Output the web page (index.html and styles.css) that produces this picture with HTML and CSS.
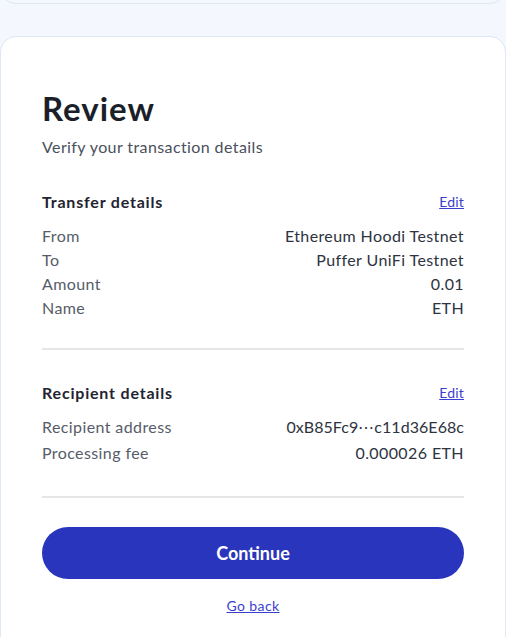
FILE: index.html
```html
<!DOCTYPE html>
<html lang="en">
<head>
<meta charset="utf-8">
<title>Review</title>
<link rel="stylesheet" href="styles.css">
</head>
<body>
<div class="page">
  <div class="prev-card"></div>
  <main class="card">
    <h1 class="title">Review</h1>
    <p class="subtitle">Verify your transaction details</p>

    <section class="section section-first">
      <div class="section-head">
        <h2 class="section-title">Transfer details</h2>
        <a class="edit" href="#">Edit</a>
      </div>
      <dl class="rows">
        <div class="row"><dt>From</dt><dd>Ethereum Hoodi Testnet</dd></div>
        <div class="row"><dt>To</dt><dd>Puffer UniFi Testnet</dd></div>
        <div class="row"><dt>Amount</dt><dd>0.01</dd></div>
        <div class="row"><dt>Name</dt><dd>ETH</dd></div>
      </dl>
    </section>

    <hr class="divider divider-first">

    <section class="section section-second">
      <div class="section-head">
        <h2 class="section-title">Recipient details</h2>
        <a class="edit" href="#">Edit</a>
      </div>
      <dl class="rows rows-loose">
        <div class="row"><dt>Recipient address</dt><dd class="address">0xB85Fc9⋯c11d36E68c</dd></div>
        <div class="row"><dt>Processing fee</dt><dd>0.000026 ETH</dd></div>
      </dl>
    </section>

    <hr class="divider divider-second">

    <div class="actions">
      <button class="primary" type="button">Continue</button>
      <a class="back" href="#">Go back</a>
    </div>
  </main>
</div>
</body>
</html>
```

FILE: styles.css
```css
* { box-sizing: border-box; }

html, body {
  margin: 0;
  padding: 0;
}

body {
  background: #f4f7fe;
  font-family: Lato, "Open Sans", sans-serif;
  color: #2d3340;
}

.page {
  display: flex;
  flex-direction: column;
}

.prev-card {
  height: 40px;
  margin-top: -36px;
  background: #f4f7fe;
  border: 1px solid #dfe7f5;
  border-radius: 16px;
}

.card {
  margin-top: 32px;
  background: #ffffff;
  border: 1px solid #dfe7f5;
  border-radius: 16px 16px 0 0;
  padding: 51px 41px 40px;
  min-height: 620px;
}

.title {
  margin: 0;
  font-size: 33px;
  line-height: 40px;
  font-weight: 700;
  letter-spacing: 1px;
  color: #1b1f2a;
}

.subtitle {
  margin: 7px 0 0;
  font-size: 16px;
  line-height: 24px;
  letter-spacing: 0.4px;
  color: #4a505c;
}

.section-first {
  margin-top: 31px;
}

.section-second {
  margin-top: 31px;
}

.section-head {
  display: flex;
  justify-content: space-between;
  align-items: center;
  height: 24px;
}

.section-title {
  margin: 0;
  font-size: 16px;
  line-height: 24px;
  font-weight: 700;
  letter-spacing: 0.8px;
  color: #1f2430;
}

.edit {
  font-size: 14px;
  line-height: 20px;
  letter-spacing: 0.2px;
  color: #3b3fce;
  text-decoration: underline;
}

.rows {
  margin: 10px 0 0;
  display: flex;
  flex-direction: column;
}

.rows-loose {
  gap: 2px;
}

.row {
  display: flex;
  justify-content: space-between;
  font-size: 16px;
  line-height: 24px;
  letter-spacing: 0.4px;
}

.row dt {
  color: #565c68;
}

.row dd {
  margin: 0;
  color: #2d3340;
  text-align: right;
}

.row .address {
  letter-spacing: 0.05px;
}

.divider {
  border: 0;
  height: 2px;
  margin: 0;
  background: #e6e6e8;
}

.divider-first {
  margin-top: 28px;
}

.divider-second {
  margin-top: 31px;
}

.actions {
  margin-top: 29px;
  display: flex;
  flex-direction: column;
  align-items: center;
  gap: 17px;
}

.primary {
  width: 100%;
  height: 52px;
  border: 0;
  border-radius: 26px;
  background: #2a35bd;
  color: #ffffff;
  font-family: inherit;
  font-size: 18px;
  font-weight: 700;
  cursor: pointer;
}

.back {
  font-size: 14px;
  line-height: 20px;
  letter-spacing: 0.4px;
  color: #3b3fce;
  text-decoration: underline;
}
```
